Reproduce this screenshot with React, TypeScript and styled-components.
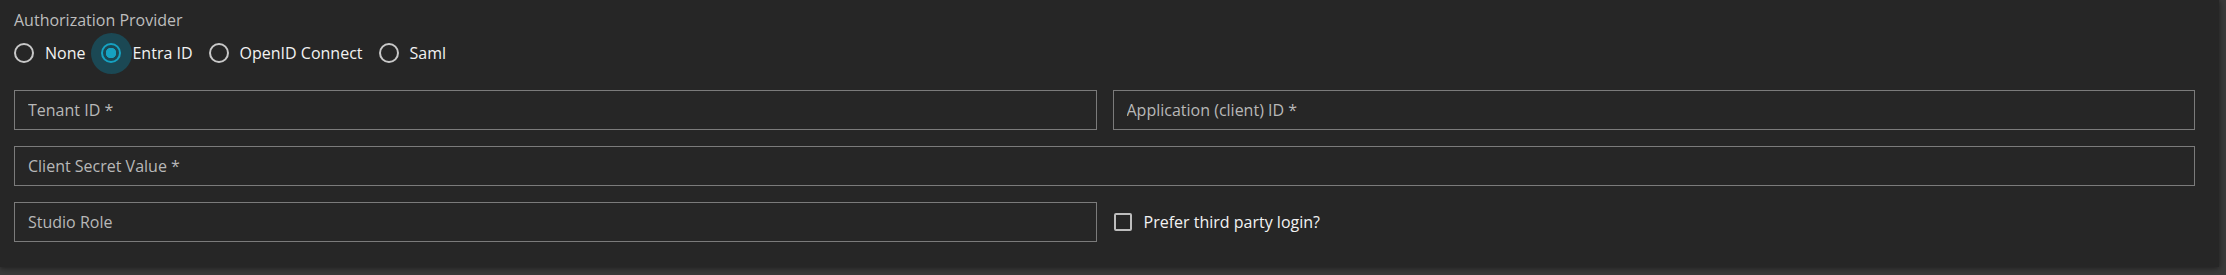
import React, { useState } from 'react';
import styled, { createGlobalStyle } from 'styled-components';

const GlobalStyle = createGlobalStyle`
  html, body {
    margin: 0;
    padding: 0;
    background: #3a3a3a;
  }
  body {
    font-family: "Segoe UI", "Open Sans", "Noto Sans", sans-serif;
    width: 2226px;
    height: 275px;
    overflow: hidden;
  }
`;

const Panel = styled.section`
  width: 2219px;
  height: 267px;
  box-sizing: border-box;
  padding: 9px 24px 0 14px;
  background: #262626;
  box-shadow: 0 1px 6px rgba(0, 0, 0, 0.55);
`;

const GroupLabel = styled.div`
  font-size: 16px;
  line-height: 22px;
  color: #bdbdbd;
`;

const RadioRow = styled.div`
  display: flex;
  align-items: center;
  gap: 16px;
  height: 44px;
`;

const RadioItem = styled.label`
  display: flex;
  align-items: center;
  gap: 11px;
  cursor: pointer;
  font-size: 16px;
  color: #f2f2f2;
`;

const RadioMark = styled.span<{ $checked: boolean }>`
  position: relative;
  width: 20px;
  height: 20px;
  flex-shrink: 0;

  /* focus halo behind the selected radio */
  &::before {
    content: '';
    display: ${(p) => (p.$checked ? 'block' : 'none')};
    position: absolute;
    left: -10.5px;
    top: -10.5px;
    width: 41px;
    height: 41px;
    border-radius: 50%;
    background: #1b4854;
  }

  &::after {
    content: '';
    position: absolute;
    inset: 0;
    box-sizing: border-box;
    border-radius: 50%;
    border: 2px solid ${(p) => (p.$checked ? '#16a2c2' : '#c8c8c8')};
    background: ${(p) =>
      p.$checked ? 'radial-gradient(circle, #16a2c2 0 5px, transparent 5.5px)' : 'transparent'};
  }
`;

const RadioText = styled.span`
  position: relative;
`;

const FieldGrid = styled.div`
  display: grid;
  grid-template-columns: 1fr 1fr;
  column-gap: 16px;
  row-gap: 16px;
  margin-top: 15px;
`;

const Field = styled.input<{ $wide?: boolean }>`
  grid-column: ${(p) => (p.$wide ? '1 / span 2' : 'auto')};
  height: 40px;
  box-sizing: border-box;
  border: 1px solid #7b7b7b;
  background: transparent;
  padding: 0 13px;
  font-family: inherit;
  font-size: 16px;
  color: #eeeeee;
  outline: none;

  &::placeholder {
    color: #b8b8b8;
    opacity: 1;
  }
`;

const CheckRow = styled.label`
  display: flex;
  align-items: center;
  gap: 12px;
  padding-left: 1px;
  font-size: 16px;
  color: #f2f2f2;
  cursor: pointer;
`;

const CheckBox = styled.span<{ $checked: boolean }>`
  width: 18px;
  height: 18px;
  box-sizing: border-box;
  border: 2px solid #bdbdbd;
  border-radius: 2px;
  background: ${(p) => (p.$checked ? '#16a2c2' : 'transparent')};
`;

const providers = ['None', 'Entra ID', 'OpenID Connect', 'Saml'];

export default function App() {
  const [provider, setProvider] = useState('Entra ID');
  const [preferThirdParty, setPreferThirdParty] = useState(false);

  return (
    <>
      <GlobalStyle />
      <Panel>
        <GroupLabel>Authorization Provider</GroupLabel>
        <RadioRow>
          {providers.map((name) => (
            <RadioItem key={name} onClick={() => setProvider(name)}>
              <RadioMark $checked={provider === name} />
              <RadioText>{name}</RadioText>
            </RadioItem>
          ))}
        </RadioRow>
        <FieldGrid>
          <Field placeholder="Tenant ID *" />
          <Field placeholder="Application (client) ID *" />
          <Field $wide placeholder="Client Secret Value *" />
          <Field placeholder="Studio Role" />
          <CheckRow onClick={() => setPreferThirdParty((v) => !v)}>
            <CheckBox $checked={preferThirdParty} />
            Prefer third party login?
          </CheckRow>
        </FieldGrid>
      </Panel>
    </>
  );
}
